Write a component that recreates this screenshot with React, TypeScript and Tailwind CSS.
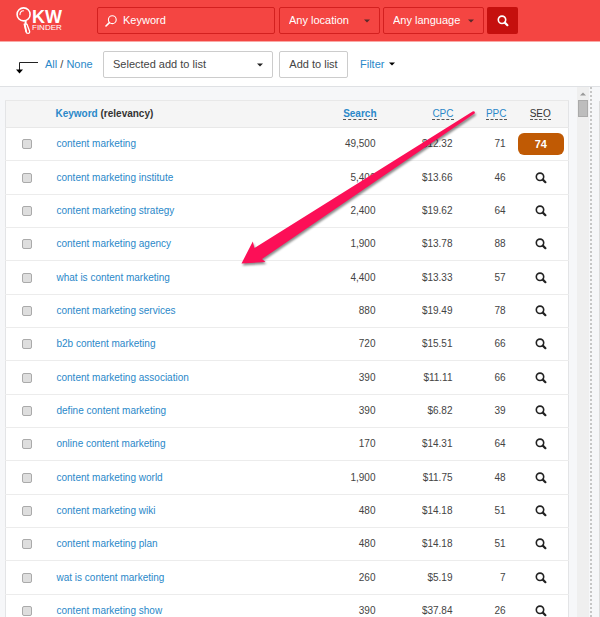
import React, { useState } from "react";
import clsx from "clsx";

type Row = {
  keyword: string;
  search: string;
  cpc: string;
  ppc: number;
  seo?: number;
};

const rows: Row[] = [
  { keyword: "content marketing", search: "49,500", cpc: "$12.32", ppc: 71, seo: 74 },
  { keyword: "content marketing institute", search: "5,400", cpc: "$13.66", ppc: 46 },
  { keyword: "content marketing strategy", search: "2,400", cpc: "$19.62", ppc: 64 },
  { keyword: "content marketing agency", search: "1,900", cpc: "$13.78", ppc: 88 },
  { keyword: "what is content marketing", search: "4,400", cpc: "$13.33", ppc: 57 },
  { keyword: "content marketing services", search: "880", cpc: "$19.49", ppc: 78 },
  { keyword: "b2b content marketing", search: "720", cpc: "$15.51", ppc: 66 },
  { keyword: "content marketing association", search: "390", cpc: "$11.11", ppc: 66 },
  { keyword: "define content marketing", search: "390", cpc: "$6.82", ppc: 39 },
  { keyword: "online content marketing", search: "170", cpc: "$14.31", ppc: 64 },
  { keyword: "content marketing world", search: "1,900", cpc: "$11.75", ppc: 48 },
  { keyword: "content marketing wiki", search: "480", cpc: "$14.18", ppc: 51 },
  { keyword: "content marketing plan", search: "480", cpc: "$14.18", ppc: 51 },
  { keyword: "wat is content marketing", search: "260", cpc: "$5.19", ppc: 7 },
  { keyword: "content marketing show", search: "390", cpc: "$37.84", ppc: 26 },
];

const SearchIcon = ({ className }: { className?: string }) => (
  <svg viewBox="0 0 12 12" className={className} fill="none" stroke="currentColor">
    <circle cx="5" cy="4.8" r="3.7" strokeWidth="1.6" />
    <path d="M7.8 7.6 10.4 10.2" strokeWidth="2.2" strokeLinecap="round" />
  </svg>
);

// Thin magnifier with the handle at the lower left, inside the keyword box
const KeywordIcon = () => (
  <svg viewBox="0 0 12 12" className="h-3 w-3 shrink-0 text-white" fill="none" stroke="currentColor">
    <circle cx="7.3" cy="4.7" r="3.9" strokeWidth="1.1" />
    <path d="M4.4 7.6 1 11" strokeWidth="1.6" strokeLinecap="round" />
  </svg>
);

const Caret = ({ className }: { className?: string }) => (
  <svg viewBox="0 0 6 4" className={clsx("h-1 w-1.5", className)} fill="currentColor">
    <path d="M0 .4h6L3 3.6z" />
  </svg>
);

const Logo = () => (
  <a href="#" aria-label="KW Finder" className="flex w-12 items-start text-white">
    <svg viewBox="0 0 16 28" className="h-7 w-4 shrink-0" fill="none" stroke="currentColor">
      <circle cx="7.6" cy="7.4" r="6.5" strokeWidth="1.6" />
      <path d="M4 7.6C4 5.2 5.4 3.8 7.6 3.7" strokeWidth="1.1" strokeLinecap="round" />
      <path d="M9.6 14v3.6" strokeWidth="2" />
      <path
        d="M8.2 17.2h2.8l2.6 7c.3 1.4-.5 2.2-1.5 2.2s-1.9-.4-2.1-1.8z"
        strokeWidth="1.3"
        strokeLinejoin="round"
      />
      <path d="M9 18 10.4 25" strokeWidth="1.6" />
    </svg>
    <span className="flex flex-col pt-[3px]">
      <span className="text-[18px] leading-[14px] font-bold">KW</span>
      <span className="text-[8px] leading-[8px]">FINDER</span>
    </span>
  </a>
);

const HeaderSelect = ({ label }: { label: string }) => (
  <div className="relative w-[101px]">
    <select
      aria-label={label}
      className="h-[27px] w-full appearance-none rounded-xs border border-[#d3201f] bg-transparent pl-[9px] text-white outline-none"
    >
      <option>{label}</option>
    </select>
    <Caret className="pointer-events-none absolute top-3 right-2.5 text-[#5b2a2a]" />
  </div>
);

const Header = () => (
  <header className="flex h-[42px] shrink-0 items-start border-b border-[#f9a9a6] bg-[#f44542] pt-[7px] pl-4 text-[11px]">
    <Logo />
    <div className="ml-[33px] flex h-[27px] w-[178px] items-center rounded-xs border border-[#d3201f] pl-[7px]">
      <KeywordIcon />
      <input
        aria-label="Keyword"
        placeholder="Keyword"
        className="ml-1.5 w-32 bg-transparent text-white outline-none placeholder:text-white"
      />
    </div>
    <div className="ml-1 flex gap-[3px]">
      <HeaderSelect label="Any location" />
      <HeaderSelect label="Any language" />
    </div>
    <button
      type="button"
      aria-label="Search"
      className="ml-[3px] flex h-[27px] w-[31px] items-center justify-center rounded-xs bg-[#c5100e] text-white"
    >
      <SearchIcon className="h-3 w-3" />
    </button>
  </header>
);

const Toolbar = ({ onAll, onNone }: { onAll: () => void; onNone: () => void }) => (
  <div className="flex h-[45px] shrink-0 items-center border-b border-[#dfe1e4] bg-white pl-4 text-[11px] text-[#444]">
    <svg viewBox="0 0 22 14" className="mt-2.5 h-3.5 w-[22px]" fill="none" stroke="#222">
      <path d="M22 .5H3.5V9" />
      <path d="M0 7.5h7L3.5 11.5z" fill="#000" stroke="none" />
    </svg>
    <div className="ml-[7px] w-[58px] whitespace-nowrap">
      <button type="button" onClick={onAll} className="text-[#2a88c9]">
        All
      </button>
      {" / "}
      <button type="button" onClick={onNone} className="text-[#2a88c9]">
        None
      </button>
    </div>
    <div className="relative w-[170px]">
      <select
        aria-label="Selected add to list"
        className="h-[27px] w-full appearance-none rounded-xs border border-[#ccc] bg-white pl-[9px] outline-none"
      >
        <option>Selected add to list</option>
      </select>
      <Caret className="pointer-events-none absolute top-3 right-2.5 text-[#222]" />
    </div>
    <button type="button" className="ml-1.5 h-[27px] w-[69px] rounded-xs border border-[#ccc] bg-white">
      Add to list
    </button>
    <button type="button" className="ml-3 flex items-center gap-[5px] text-[#2a88c9]">
      Filter
      <Caret className="text-black" />
    </button>
  </div>
);

const SortLink = ({ children }: { children: React.ReactNode }) => (
  <a href="#" className="border-b border-dashed border-[#555] text-[#2a88c9]">
    {children}
  </a>
);

const KeywordTable = ({
  checked,
  onToggle,
}: {
  checked: string[];
  onToggle: (keyword: string) => void;
}) => (
  <table className="w-full table-fixed border border-[#e3e4e6] bg-white text-[10px] leading-3 text-[#444]">
    <thead>
      <tr className="h-[27px] border-y border-[#e8e8e8] bg-[#f5f5f5] text-[#333]">
        <th className="w-[50px]" />
        <th className="text-left font-bold">
          <a href="#" className="text-[#2a88c9]">
            Keyword
          </a>{" "}
          (relevancy)
        </th>
        <th className="w-[90px] text-right font-bold">
          <SortLink>Search</SortLink>
        </th>
        <th className="w-[77px] text-right font-medium">
          <SortLink>CPC</SortLink>
        </th>
        <th className="w-[53px] text-right font-medium">
          <SortLink>PPC</SortLink>
        </th>
        <th className="w-[62px] pl-1.5 text-center font-medium">
          <span className="border-b border-dashed border-[#555]">SEO</span>
        </th>
      </tr>
    </thead>
    <tbody>
      {rows.map((row) => (
        <tr key={row.keyword} className="h-[33px] border-b border-[#ececec] nth-[3n+2]:h-[34px]">
          <td className="pl-4">
            <input
              type="checkbox"
              aria-label={row.keyword}
              checked={checked.includes(row.keyword)}
              onChange={() => onToggle(row.keyword)}
              className="block h-2.5 w-2.5 appearance-none rounded-xs border border-[#aaa] bg-[#dedede] checked:bg-[#2a88c9]"
            />
          </td>
          <td className="pl-px">
            <a href="#" className="text-[#2a88c9]">
              {row.keyword}
            </a>
          </td>
          <td className="pr-px text-right">{row.search}</td>
          <td className="pr-px text-right">{row.cpc}</td>
          <td className="pr-px text-right">{row.ppc}</td>
          <td className="pr-1 pl-[11px]">
            {row.seo ? (
              <span className="flex h-[22px] items-center justify-center rounded-md bg-[#c05a04] text-[11px] font-bold text-white">
                {row.seo}
              </span>
            ) : (
              <button type="button" aria-label="Check SEO" className="mx-auto block text-[#222]">
                <SearchIcon className="h-3 w-3" />
              </button>
            )}
          </td>
        </tr>
      ))}
    </tbody>
  </table>
);

// Callout pointing at the keyword list
const Arrow = () => (
  <svg
    viewBox="0 0 244 164"
    className="pointer-events-none absolute top-[108px] left-[236px] h-[164px] w-[244px] drop-shadow-[1px_2px_1px_rgba(0,0,0,0.45)]"
  >
    <path
      d="M237 3.3Q239.6 3.2 238.6 5.4L26 151 29.5 154 5.5 155.5 16.8 133.5 18.5 140z"
      fill="#fc0f57"
    />
  </svg>
);

export default function App() {
  const [checked, setChecked] = useState<string[]>([]);

  const toggle = (keyword: string) => {
    setChecked((prev) =>
      prev.includes(keyword) ? prev.filter((k) => k !== keyword) : [...prev, keyword]
    );
  };

  return (
    <div className="relative flex h-screen flex-col overflow-hidden bg-[#f6f7f9] font-['Liberation_Sans',Arial,sans-serif]">
      <Header />
      <Toolbar onAll={() => setChecked(rows.map((r) => r.keyword))} onNone={() => setChecked([])} />
      <main className="flex min-h-0 flex-1">
        <div className="min-w-0 flex-1 overflow-hidden pt-[13px] pr-2 pl-[5px]">
          <KeywordTable checked={checked} onToggle={toggle} />
        </div>
        <div className="flex w-3 flex-col items-center bg-[#efefef]">
          <Caret className="mt-[5px] rotate-180 text-[#999]" />
          <div className="mt-1 h-[17px] w-2.5 border border-[#aaa] bg-[#bdbdbd]" />
        </div>
        <div className="w-[3px] border-r-2 border-dotted border-[#c6c6c6]" />
        <div className="w-2 pt-[14px] pl-[7px]">
          <div className="h-full border-l border-[#dcdcdc]" />
        </div>
      </main>
      <Arrow />
    </div>
  );
}
